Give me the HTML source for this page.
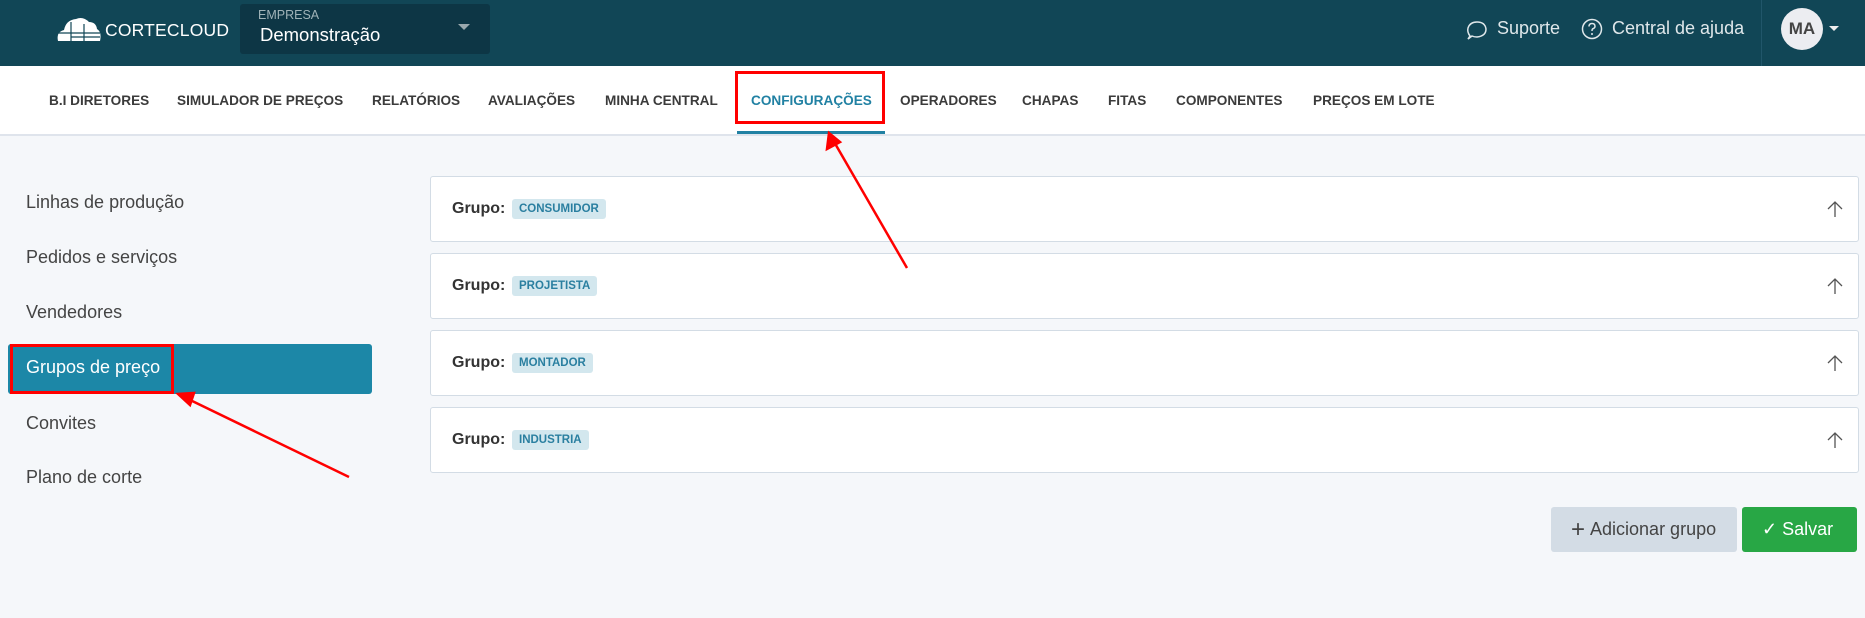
<!DOCTYPE html>
<html><head><meta charset="utf-8"><style>
*{box-sizing:border-box;margin:0;padding:0}
body{width:1865px;height:618px;background:#f5f7fa;font-family:"Liberation Sans",sans-serif;position:relative;overflow:hidden}
.hdr{position:absolute;left:0;top:0;width:1865px;height:66px;background:#114656}
.abs{position:absolute;white-space:nowrap}
.nav{position:absolute;top:66px;left:0;width:1865px;height:70px;background:#fff;border-bottom:2px solid #dfe4ec}
.nav span{position:absolute;top:27px;font-size:13.6px;font-weight:bold;color:#3b3b3b}
.side{position:absolute;left:26px;font-size:18px;color:#444}
.card{position:absolute;left:430px;width:1429px;height:66px;background:#fff;border:1px solid #d3dce5;border-radius:3px}
.card b{position:absolute;left:21px;top:23px;font-size:16px;color:#333}
.tag{position:absolute;left:81px;top:22px;height:20px;line-height:20px;padding:0 7px;background:#d3e7ee;color:#2a7fa0;font-size:11.5px;font-weight:bold;border-radius:3px}
.card svg{position:absolute;right:14px;top:23px}
</style></head><body>
<div class="hdr"></div>
<svg class="abs" style="left:56px;top:16px" width="46" height="25" viewBox="0 0 46 25"><path d="M2 25 Q0 16 8 14 Q10 4 20 3 Q27 0 33 6 Q40 6 41 13 Q46 16 44 25Z" fill="#fff"/><path d="M15 6V25M28 8V25M2 17H44M15 21H44" stroke="#114656" stroke-width="1.2"/></svg>
<div class="abs" style="left:105px;top:20px;font-size:17.5px;color:#fff;letter-spacing:0.2px">CORTECLOUD</div>
<div class="abs" style="left:240px;top:4px;width:250px;height:50px;background:#0d3645;border-radius:3px"></div>
<div class="abs" style="left:258px;top:8px;font-size:12.5px;color:#9fb3b8">EMPRESA</div>
<div class="abs" style="left:260px;top:24px;font-size:18.5px;color:#fff">Demonstração</div>
<div class="abs" style="left:458px;top:24px;width:0;height:0;border-left:6px solid transparent;border-right:6px solid transparent;border-top:6px solid #9aa9ae"></div>
<svg class="abs" style="left:1466px;top:19px" width="22" height="22" viewBox="0 0 22 22"><path d="M4 17 Q1 13 2 9 Q4 3 11 3 Q19 3 20 10 Q20 17 11 18 Q8 18 6 17 L2 20Z" fill="none" stroke="#dfe7ea" stroke-width="1.5"/></svg>
<div class="abs" style="left:1497px;top:18px;font-size:18px;color:#dfe7ea">Suporte</div>
<svg class="abs" style="left:1581px;top:18px" width="22" height="22" viewBox="0 0 22 22"><circle cx="11" cy="11" r="9.5" fill="none" stroke="#dfe7ea" stroke-width="1.5"/><path d="M8 8.5Q8 5.5 11 5.5Q14 5.5 14 8.3Q14 10 11.5 11Q11 11.5 11 13" fill="none" stroke="#dfe7ea" stroke-width="1.5"/><circle cx="11" cy="16" r="1" fill="#dfe7ea"/></svg>
<div class="abs" style="left:1612px;top:18px;font-size:18px;color:#dfe7ea">Central de ajuda</div>
<div class="abs" style="left:1761px;top:0;width:1px;height:66px;background:#21566a"></div>
<div class="abs" style="left:1781px;top:8px;width:42px;height:42px;border-radius:50%;background:#ecedf1;color:#444;font-weight:bold;font-size:17px;text-align:center;line-height:42px">MA</div>
<div class="abs" style="left:1829px;top:26px;width:0;height:0;border-left:5px solid transparent;border-right:5px solid transparent;border-top:5px solid #eee"></div>
<div class="nav">
<span style="left:49px">B.I DIRETORES</span><span style="left:177px">SIMULADOR DE PREÇOS</span><span style="left:372px">RELATÓRIOS</span><span style="left:488px">AVALIAÇÕES</span><span style="left:605px">MINHA CENTRAL</span><span style="left:751px;color:#2181a3">CONFIGURAÇÕES</span><span style="left:900px">OPERADORES</span><span style="left:1022px">CHAPAS</span><span style="left:1108px">FITAS</span><span style="left:1176px">COMPONENTES</span><span style="left:1313px">PREÇOS EM LOTE</span>
<div class="abs" style="left:737px;top:65px;width:148px;height:3px;background:#2181a3"></div>
</div>
<div class="abs" style="left:735px;top:71px;width:150px;height:53px;border:3px solid #f00"></div>
<div class="side" style="top:192px">Linhas de produção</div>
<div class="side" style="top:247px">Pedidos e serviços</div>
<div class="side" style="top:302px">Vendedores</div>
<div class="abs" style="left:8px;top:344px;width:364px;height:50px;background:#1c87a7;border-radius:3px"></div>
<div class="side" style="top:357px;color:#fff">Grupos de preço</div>
<div class="abs" style="left:10px;top:344px;width:164px;height:50px;border:3px solid #f00"></div>
<div class="side" style="top:413px">Convites</div>
<div class="side" style="top:467px">Plano de corte</div>
<div class="card" style="top:176px"><b>Grupo:</b><span class="tag">CONSUMIDOR</span><svg width="18" height="18" viewBox="0 0 18 18"><path d="M9 17V2M2 9L9 2L16 9" fill="none" stroke="#555" stroke-width="1.3"/></svg></div>
<div class="card" style="top:253px"><b>Grupo:</b><span class="tag">PROJETISTA</span><svg width="18" height="18" viewBox="0 0 18 18"><path d="M9 17V2M2 9L9 2L16 9" fill="none" stroke="#555" stroke-width="1.3"/></svg></div>
<div class="card" style="top:330px"><b>Grupo:</b><span class="tag">MONTADOR</span><svg width="18" height="18" viewBox="0 0 18 18"><path d="M9 17V2M2 9L9 2L16 9" fill="none" stroke="#555" stroke-width="1.3"/></svg></div>
<div class="card" style="top:407px"><b>Grupo:</b><span class="tag">INDUSTRIA</span><svg width="18" height="18" viewBox="0 0 18 18"><path d="M9 17V2M2 9L9 2L16 9" fill="none" stroke="#555" stroke-width="1.3"/></svg></div>
<div class="abs" style="left:1551px;top:507px;width:186px;height:45px;background:#d3dce5;border-radius:3px;font-size:18px;color:#444;line-height:45px;padding-left:20px"><span style="font-size:24px;vertical-align:-2px">+</span>&nbsp;Adicionar grupo</div>
<div class="abs" style="left:1742px;top:507px;width:115px;height:45px;background:#28a745;border-radius:3px;font-size:18px;color:#fff;line-height:45px;padding-left:20px"><span style="font-size:18px">✓</span>&nbsp;Salvar</div>
<svg class="abs" style="left:0;top:0" width="1865" height="618"><g stroke="#f00" stroke-width="2.5" fill="#f00"><line x1="907" y1="268" x2="833" y2="140"/><polygon points="829,133 827,149 840,142"/><line x1="349" y1="477" x2="186" y2="398"/><polygon points="178,394 190,405 194,393"/></g></svg>
</body></html>
